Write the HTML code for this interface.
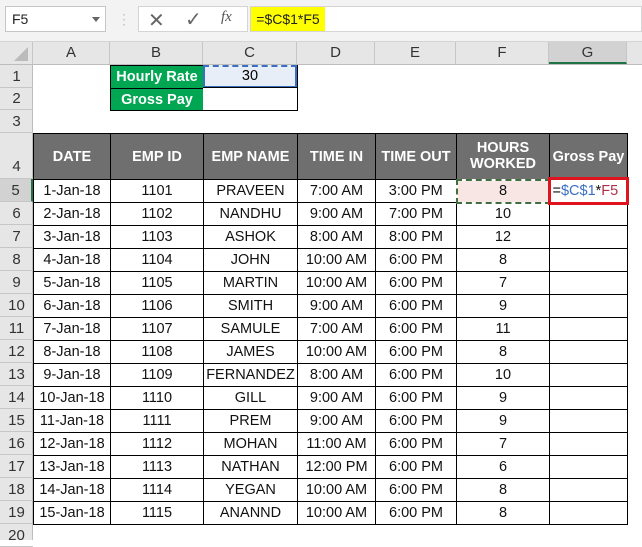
<!DOCTYPE html>
<html><head><style>
*{margin:0;padding:0;box-sizing:border-box}
body{width:642px;height:540px;overflow:hidden;background:#fff;font-family:"Liberation Sans",sans-serif;position:relative}
.a{position:absolute}
#top{left:0;top:0;width:642px;height:42px;background:#f3f3f3;border-bottom:1px solid #d4d4d4}
#colh{left:0;top:42px;width:642px;height:23px;background:#e6e6e6;border-bottom:1px solid #bdbdbd}
.ch{position:absolute;top:0;height:22px;line-height:22px;text-align:center;font-size:15px;color:#333;border-right:1px solid #c6c6c6}
#rowh{left:0;top:65px;width:33px;height:475px;background:#e6e6e6;border-right:1px solid #bdbdbd}
.rh{position:absolute;left:0;width:33px;text-align:center;font-size:15px;color:#333;border-bottom:1px solid #c6c6c6}
table{position:absolute;left:33px;top:133px;border-collapse:collapse;table-layout:fixed}
td{border:1px solid #000;height:23px;text-align:center;font-size:14.5px;color:#111;padding:0;white-space:nowrap;overflow:hidden}
tr.h td{height:46px;background:#6f6f6f;color:#fff;font-weight:bold;font-size:14.5px;border-color:#000}
</style></head><body>
<div class="a" id="top"></div>
<div class="a" style="left:5px;top:6px;width:101px;height:26px;background:#fff;border:1px solid #c6c6c6;font-size:14px;line-height:24px;padding-left:6px;color:#222">F5</div>
<div class="a" style="left:92px;top:17px;width:0;height:0;border-left:4px solid transparent;border-right:4px solid transparent;border-top:5px solid #666"></div>
<div class="a" style="left:122px;top:12px;color:#aaa;font-size:12px;line-height:5px">·<br>·<br>·</div>
<div class="a" style="left:138px;top:6px;width:110px;height:26px;background:#fff;border:1px solid #d4d4d4"></div>
<div class="a" style="left:148px;top:8px;font-size:20px;color:#666">✕</div>
<div class="a" style="left:185px;top:7px;font-size:20px;color:#666">✓</div>
<div class="a" style="left:221px;top:9px;font-size:15px;color:#555;font-family:'Liberation Serif',serif;font-style:italic">fx</div>
<div class="a" style="left:250px;top:6px;width:392px;height:26px;background:#fff;border:1px solid #d4d4d4"></div>
<div class="a" style="left:251px;top:7px;width:74px;height:24px;background:#ffff00;font-size:14px;line-height:24px;text-align:center;color:#222">=$C$1*F5</div>

<div class="a" id="colh">
<div class="ch" style="left:0;width:33px;background:#e6e6e6"><div style="position:absolute;right:4px;bottom:3px;width:0;height:0;border-left:14px solid transparent;border-bottom:14px solid #bbb"></div></div>
<div class="ch" style="left:33px;width:77px">A</div>
<div class="ch" style="left:110px;width:93px">B</div>
<div class="ch" style="left:203px;width:94px">C</div>
<div class="ch" style="left:297px;width:78px">D</div>
<div class="ch" style="left:375px;width:81px">E</div>
<div class="ch" style="left:456px;width:93px">F</div>
<div class="ch" style="left:549px;width:78px;background:#d2d2d2;border-bottom:2px solid #217346">G</div>
</div>

<div class="a" id="rowh">
<div class="rh" style="top:0;height:23px;line-height:23px">1</div>
<div class="rh" style="top:23px;height:22px;line-height:22px">2</div>
<div class="rh" style="top:45px;height:23px;line-height:23px">3</div>
<div class="rh" style="top:68px;height:46px;line-height:68px">4</div>
<div class="rh" style="top:114px;height:23px;line-height:23px;background:#d2d2d2;border-right:2px solid #217346">5</div>
<div class="rh" style="top:137px;height:23px;line-height:23px">6</div>
<div class="rh" style="top:160px;height:23px;line-height:23px">7</div>
<div class="rh" style="top:183px;height:23px;line-height:23px">8</div>
<div class="rh" style="top:206px;height:23px;line-height:23px">9</div>
<div class="rh" style="top:229px;height:23px;line-height:23px">10</div>
<div class="rh" style="top:252px;height:23px;line-height:23px">11</div>
<div class="rh" style="top:275px;height:23px;line-height:23px">12</div>
<div class="rh" style="top:298px;height:23px;line-height:23px">13</div>
<div class="rh" style="top:321px;height:23px;line-height:23px">14</div>
<div class="rh" style="top:344px;height:23px;line-height:23px">15</div>
<div class="rh" style="top:367px;height:23px;line-height:23px">16</div>
<div class="rh" style="top:390px;height:23px;line-height:23px">17</div>
<div class="rh" style="top:413px;height:23px;line-height:23px">18</div>
<div class="rh" style="top:436px;height:23px;line-height:23px">19</div>
<div class="rh" style="top:459px;height:23px;line-height:23px">20</div>
</div>

<!-- B1:C2 -->
<div class="a" style="left:110px;top:65px;width:188px;height:46px;border:1px solid #000"></div>
<div class="a" style="left:111px;top:66px;width:92px;height:22px;background:#00a651;color:#fff;font-weight:bold;font-size:14.5px;line-height:22px;text-align:center">Hourly Rate</div>
<div class="a" style="left:111px;top:88px;width:92px;height:22px;background:#00a651;color:#fff;font-weight:bold;font-size:14.5px;line-height:22px;text-align:center;border-top:1px solid #000">Gross Pay</div>
<div class="a" style="left:203px;top:65px;width:94px;height:23px;background:#e8eef8;border:2px solid #3c6ec0;border-style:dashed solid solid solid;font-size:14.5px;line-height:19px;text-align:center">30</div>
<div class="a" style="left:203px;top:87px;width:94px;height:1px;border-top:1px solid #000"></div>

<table>
<colgroup><col style="width:77px"><col style="width:93px"><col style="width:94px"><col style="width:78px"><col style="width:81px"><col style="width:93px"><col style="width:78px"></colgroup>
<tr class="h"><td>DATE</td><td>EMP ID</td><td>EMP NAME</td><td>TIME IN</td><td>TIME OUT</td><td>HOURS<br>WORKED</td><td>Gross Pay</td></tr>
<tr><td>1-Jan-18</td><td>1101</td><td>PRAVEEN</td><td>7:00 AM</td><td>3:00 PM</td><td style="background:#f7e6e4;border:2px dashed #3f6e3f">8</td><td style="text-align:left;padding-left:2px"><span>=</span><span style="color:#3b6fc4">$C$1</span>*<span style="color:#b0304a">F5</span></td></tr>
<tr><td>2-Jan-18</td><td>1102</td><td>NANDHU</td><td>9:00 AM</td><td>7:00 PM</td><td>10</td><td></td></tr>
<tr><td>3-Jan-18</td><td>1103</td><td>ASHOK</td><td>8:00 AM</td><td>8:00 PM</td><td>12</td><td></td></tr>
<tr><td>4-Jan-18</td><td>1104</td><td>JOHN</td><td>10:00 AM</td><td>6:00 PM</td><td>8</td><td></td></tr>
<tr><td>5-Jan-18</td><td>1105</td><td>MARTIN</td><td>10:00 AM</td><td>6:00 PM</td><td>7</td><td></td></tr>
<tr><td>6-Jan-18</td><td>1106</td><td>SMITH</td><td>9:00 AM</td><td>6:00 PM</td><td>9</td><td></td></tr>
<tr><td>7-Jan-18</td><td>1107</td><td>SAMULE</td><td>7:00 AM</td><td>6:00 PM</td><td>11</td><td></td></tr>
<tr><td>8-Jan-18</td><td>1108</td><td>JAMES</td><td>10:00 AM</td><td>6:00 PM</td><td>8</td><td></td></tr>
<tr><td>9-Jan-18</td><td>1109</td><td>FERNANDEZ</td><td>8:00 AM</td><td>6:00 PM</td><td>10</td><td></td></tr>
<tr><td>10-Jan-18</td><td>1110</td><td>GILL</td><td>9:00 AM</td><td>6:00 PM</td><td>9</td><td></td></tr>
<tr><td>11-Jan-18</td><td>1111</td><td>PREM</td><td>9:00 AM</td><td>6:00 PM</td><td>9</td><td></td></tr>
<tr><td>12-Jan-18</td><td>1112</td><td>MOHAN</td><td>11:00 AM</td><td>6:00 PM</td><td>7</td><td></td></tr>
<tr><td>13-Jan-18</td><td>1113</td><td>NATHAN</td><td>12:00 PM</td><td>6:00 PM</td><td>6</td><td></td></tr>
<tr><td>14-Jan-18</td><td>1114</td><td>YEGAN</td><td>10:00 AM</td><td>6:00 PM</td><td>8</td><td></td></tr>
<tr><td>15-Jan-18</td><td>1115</td><td>ANANND</td><td>10:00 AM</td><td>6:00 PM</td><td>8</td><td></td></tr>
</table>
<div class="a" style="left:548px;top:177px;width:81px;height:28px;border:3px solid #e0141e"></div>
</body></html>
